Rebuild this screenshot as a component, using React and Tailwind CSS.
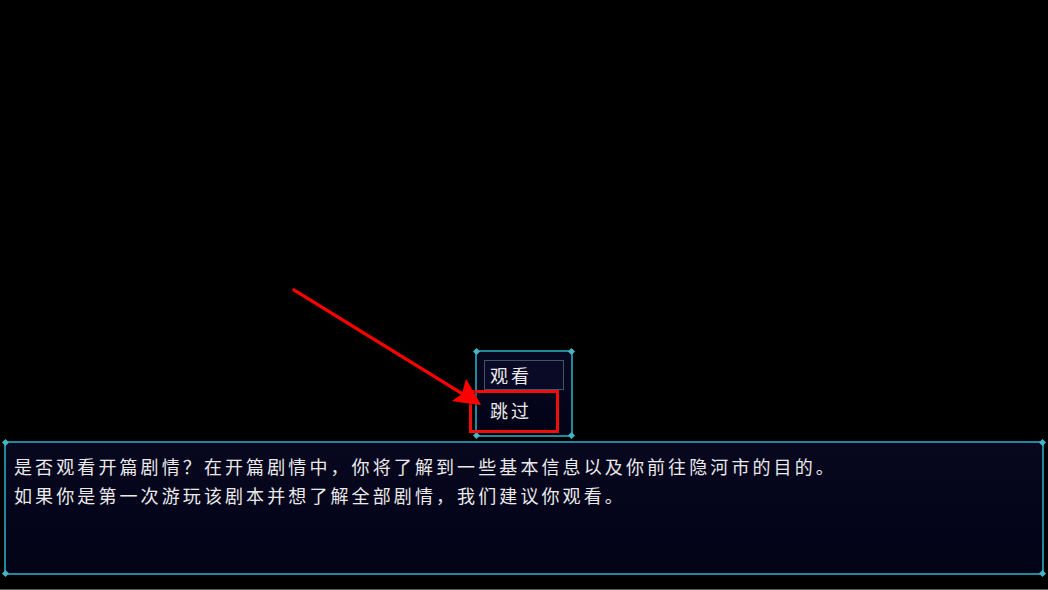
import React from 'react';

const FONT = { fontFamily: '"Noto Sans CJK SC", "Noto Sans", sans-serif' };

// small cyan diamond sitting on each corner of a window frame
const Corner = ({ pos }) => (
  <span className={`absolute h-[5px] w-[5px] rotate-45 bg-[#45b4c4] ${pos}`} />
);

const Frame = ({ className = '', children }) => (
  <div
    className={`relative rounded-[4px] border-2 border-[#23879a] bg-gradient-to-b from-[#07071f] to-[#030317] ${className}`}
  >
    <Corner pos="-left-[3px] -top-[3px]" />
    <Corner pos="-right-[3px] -top-[3px]" />
    <Corner pos="-left-[3px] -bottom-[3px]" />
    <Corner pos="-right-[3px] -bottom-[3px]" />
    {children}
  </div>
);

const choices = ['观看', '跳过'];

const ChoiceWindow = ({ selected = 0 }) => (
  <Frame className="mx-auto h-[87px] w-[98px] shrink-0 px-[7px] pt-[8px]">
    <div className="flex flex-col gap-[5px]">
      {choices.map((label, i) => (
        <div
          key={label}
          className={`flex h-[30px] items-center pl-[5px] text-[18px] tracking-[3px] text-[#eaeaea] ${
            i === selected ? 'border border-[#3b5868] bg-[#0a0a26]' : 'border border-transparent'
          }`}
        >
          {label}
        </div>
      ))}
    </div>
  </Frame>
);

const MessageWindow = () => (
  <Frame className="mx-[4px] h-[134px] shrink-0 pl-[8px] pt-[9px]">
    <p className="text-[18px] leading-[29px] tracking-[3.1px] text-[#eaeaea]">
      是否观看开篇剧情？在开篇剧情中，你将了解到一些基本信息以及你前往隐河市的目的。
    </p>
    <p className="text-[18px] leading-[29px] tracking-[3.1px] text-[#eaeaea]">
      如果你是第一次游玩该剧本并想了解全部剧情，我们建议你观看。
    </p>
  </Frame>
);

// red pointer arrow with a notched head
const Pointer = () => (
  <svg
    className="pointer-events-none absolute inset-0"
    width="1048"
    height="590"
    viewBox="0 0 1048 590"
  >
    <defs>
      <filter id="soft" x="-10%" y="-10%" width="120%" height="120%">
        <feDropShadow dx="0" dy="0" stdDeviation="1.5" floodColor="#000" floodOpacity="0.9" />
      </filter>
    </defs>
    <g filter="url(#soft)" fill="#ff0000" stroke="#ff0000">
      <line x1="294" y1="290" x2="466" y2="396" strokeWidth="3.2" strokeLinecap="round" />
      <polygon points="481,405 452,401 462,394 466,379" stroke="none" />
    </g>
  </svg>
);

const App = () => (
  <div
    className="relative flex h-[590px] w-[1048px] flex-col overflow-hidden bg-black"
    style={FONT}
  >
    <div className="flex-1" />
    <ChoiceWindow selected={0} />
    <div className="h-[4px] shrink-0" />
    <MessageWindow />
    <div className="h-[14px] shrink-0" />
    <div className="h-px shrink-0 bg-[#5c5c5c]" />

    {/* highlight around the "skip" option */}
    <div className="pointer-events-none absolute left-[469px] top-[390px] h-[43px] w-[90px] border-[3px] border-[#f20d0d]" />
    <Pointer />
  </div>
);

export default App;
